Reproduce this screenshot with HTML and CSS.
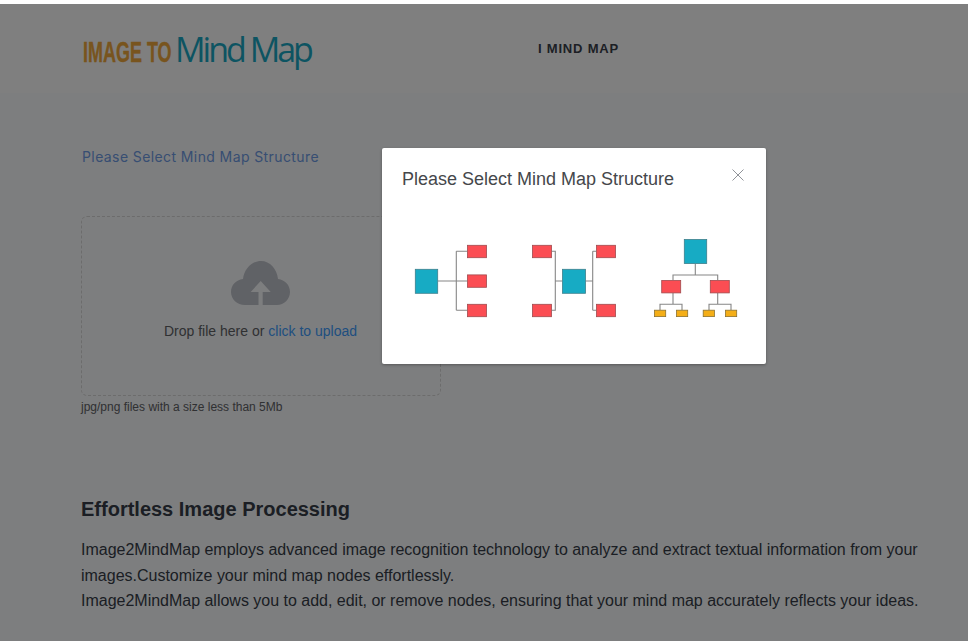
FILE: index.html
```html
<!DOCTYPE html>
<html lang="en">
<head>
<meta charset="utf-8">
<title>Image to Mind Map</title>
<link rel="stylesheet" href="styles.css">
</head>
<body>
<div class="strip"></div>
<header class="top">
  <a class="logo"><span class="logo-a"><span class="logo-a-in">IMAGE TO</span></span><span class="logo-b">Mind Map</span></a>
  <nav class="nav">I MIND MAP</nav>
</header>
<main class="page">
  <p class="select-link">Please Select Mind Map Structure</p>
  <div class="drop">
    <svg class="cloud" viewBox="0 0 59 44"><path d="M14 44C6 44 0 38 0 31 0 24 5 19 12 18 13 8 21 0 30 0 39 0 46 8 47 18 54 19 59 24 59 31 59 38 53 44 46 44H31.7V31H39.7L29.7 20 19.7 31H27.5V44Z"/></svg>
    <div class="drop-text">Drop file here or <em>click to upload</em></div>
  </div>
  <p class="hint">jpg/png files with a size less than 5Mb</p>
  <h2 class="head">Effortless Image Processing</h2>
  <p class="copy">Image2MindMap employs advanced image recognition technology to analyze and extract textual information from your images.Customize your mind map nodes effortlessly.<br>Image2MindMap allows you to add, edit, or remove nodes, ensuring that your mind map accurately reflects your ideas.</p>
</main>
<div class="overlay"></div>
<section class="modal">
  <div class="modal-head">
    <span class="modal-title">Please Select Mind Map Structure</span>
    <svg class="close" viewBox="0 0 12 12"><path d="M.5.5l11 11M11.5.5l-11 11"/></svg>
  </div>
  <div class="choices">
    <svg class="map map-a" viewBox="405 238 90 80">
      <path class="ln" d="M438 281H467M456.3 251.3V310.3M456.3 251.3H467M456.3 310.3H467"/>
      <rect class="teal" x="415.3" y="269.3" width="22.4" height="24"/>
      <rect class="red" x="467.5" y="245.3" width="19" height="12.4"/>
      <rect class="red" x="467.5" y="274.9" width="19" height="12.4"/>
      <rect class="red" x="467.5" y="304.3" width="19" height="12.4"/>
    </svg>
    <svg class="map map-b" viewBox="525 238 100 80">
      <path class="ln" d="M552 251.3H555.3V310.3H552M555.3 281H562M586 281H592.7M592.7 251.3V310.3M592.7 251.3H596M592.7 310.3H596"/>
      <rect class="teal" x="562.5" y="269.3" width="23" height="24"/>
      <rect class="red" x="532.5" y="245.3" width="19" height="12.4"/>
      <rect class="red" x="532.5" y="304.3" width="19" height="12.4"/>
      <rect class="red" x="596.5" y="245.3" width="19" height="12.4"/>
      <rect class="red" x="596.5" y="304.3" width="19" height="12.4"/>
    </svg>
    <svg class="map map-c" viewBox="645 238 100 80">
      <path class="ln" d="M695.3 264V275M673 280V275H717.7V280M673 293V304.3M717.7 293V304.3M660 310V304.3H682V310M709 310V304.3H731V310"/>
      <rect class="teal" x="684.3" y="239.5" width="22.4" height="24"/>
      <rect class="red" x="661.7" y="280.5" width="19" height="12.4"/>
      <rect class="red" x="710.3" y="280.5" width="19" height="12.4"/>
      <rect class="amber" x="654.5" y="310.2" width="11.2" height="6.4"/>
      <rect class="amber" x="676.5" y="310.2" width="11.2" height="6.4"/>
      <rect class="amber" x="703.2" y="310.2" width="11.2" height="6.4"/>
      <rect class="amber" x="725.5" y="310.2" width="11.2" height="6.4"/>
    </svg>
  </div>
</section>
</body>
</html>
```
FILE: styles.css
```css
* { box-sizing: border-box; }
html, body { margin: 0; height: 100%; overflow: hidden; }
body { background: #fbfcfe; font-family: "Liberation Sans", Arial, sans-serif; color: #303133; position: relative; }
.strip { height: 4px; background: #fff; }
.top { height: 89px; background: #fff; display: flex; align-items: flex-start; }
.logo { margin: 22px 0 0 83px; width: 455px; display: flex; align-items: baseline; height: 50px; white-space: nowrap; }
.logo-a { display: inline-block; width: 88px; flex: none; }
.logo-a-in { display: inline-block; font-weight: 700; font-size: 29px; color: #f0a93c; -webkit-text-stroke: .4px #f0a93c; transform: scaleX(.62); transform-origin: left; }
.logo-b { font-family: "Open Sans", sans-serif; font-size: 34px; color: #1ba9c4; letter-spacing: -3px; margin-left: 4px; }
.nav { margin-top: 37px; font-weight: 700; font-size: 13px; letter-spacing: .8px; color: #3a3f4a; line-height: 16px; }
.page { padding: 0 0 0 81px; width: 968px; }
.select-link { margin: 54px 0 0 1px; font-family: Inter, "Open Sans", sans-serif; font-size: 14px; line-height: 20px; color: #6f9de6; letter-spacing: .4px; }
.drop { margin-top: 49px; width: 360px; height: 180px; border: 1px dashed #d9d9d9; border-radius: 6px; padding-right: 1px; display: flex; flex-direction: column; align-items: center; }
.cloud { width: 59px; height: 44px; margin-top: 44px; fill: #c0c4cc; }
.drop-text { margin-top: 17px; font-size: 14px; line-height: 18px; color: #606266; }
.drop-text em { font-style: normal; color: #409eff; }
.hint { margin: 4px 0 0; font-size: 12px; line-height: 14px; color: #606266; }
.head { margin: 83px 0 0; font-size: 20px; line-height: 24px; font-weight: 700; color: #363c48; }
.copy { margin: 16px 0 0; width: 860px; font-size: 16px; line-height: 25.6px; color: #363c48; letter-spacing: -.01px; }
.overlay { position: absolute; left: 0; right: 0; top: 4px; bottom: 0; background: rgba(0, 0, 0, .5); }
.modal { position: absolute; left: 382px; top: 148px; width: 384px; height: 216px; background: #fff; border-radius: 2px; box-shadow: 0 1px 3px rgba(0, 0, 0, .3); }
.modal-head { height: 90px; padding: 20px 22px 0 20px; display: flex; justify-content: space-between; align-items: flex-start; }
.modal-title { font-size: 18px; line-height: 22px; color: #45474b; }
.close { width: 12px; height: 12px; margin-top: 1px; fill: none; stroke: #909399; stroke-width: 1; }
.choices { display: flex; padding-left: 23px; }
.map { height: 80px; flex: none; }
.map-a { width: 90px; }
.map-b { width: 100px; margin-left: 30px; }
.map-c { width: 100px; margin-left: 20px; }
.ln { fill: none; stroke: #868686; stroke-width: 1.1; }
.teal { fill: #17abc4; stroke: #3d7f8c; stroke-width: .8; }
.red { fill: #fb4d53; stroke: #a04a4e; stroke-width: .8; }
.amber { fill: #f4ae17; stroke: #8c7230; stroke-width: .8; }
```
